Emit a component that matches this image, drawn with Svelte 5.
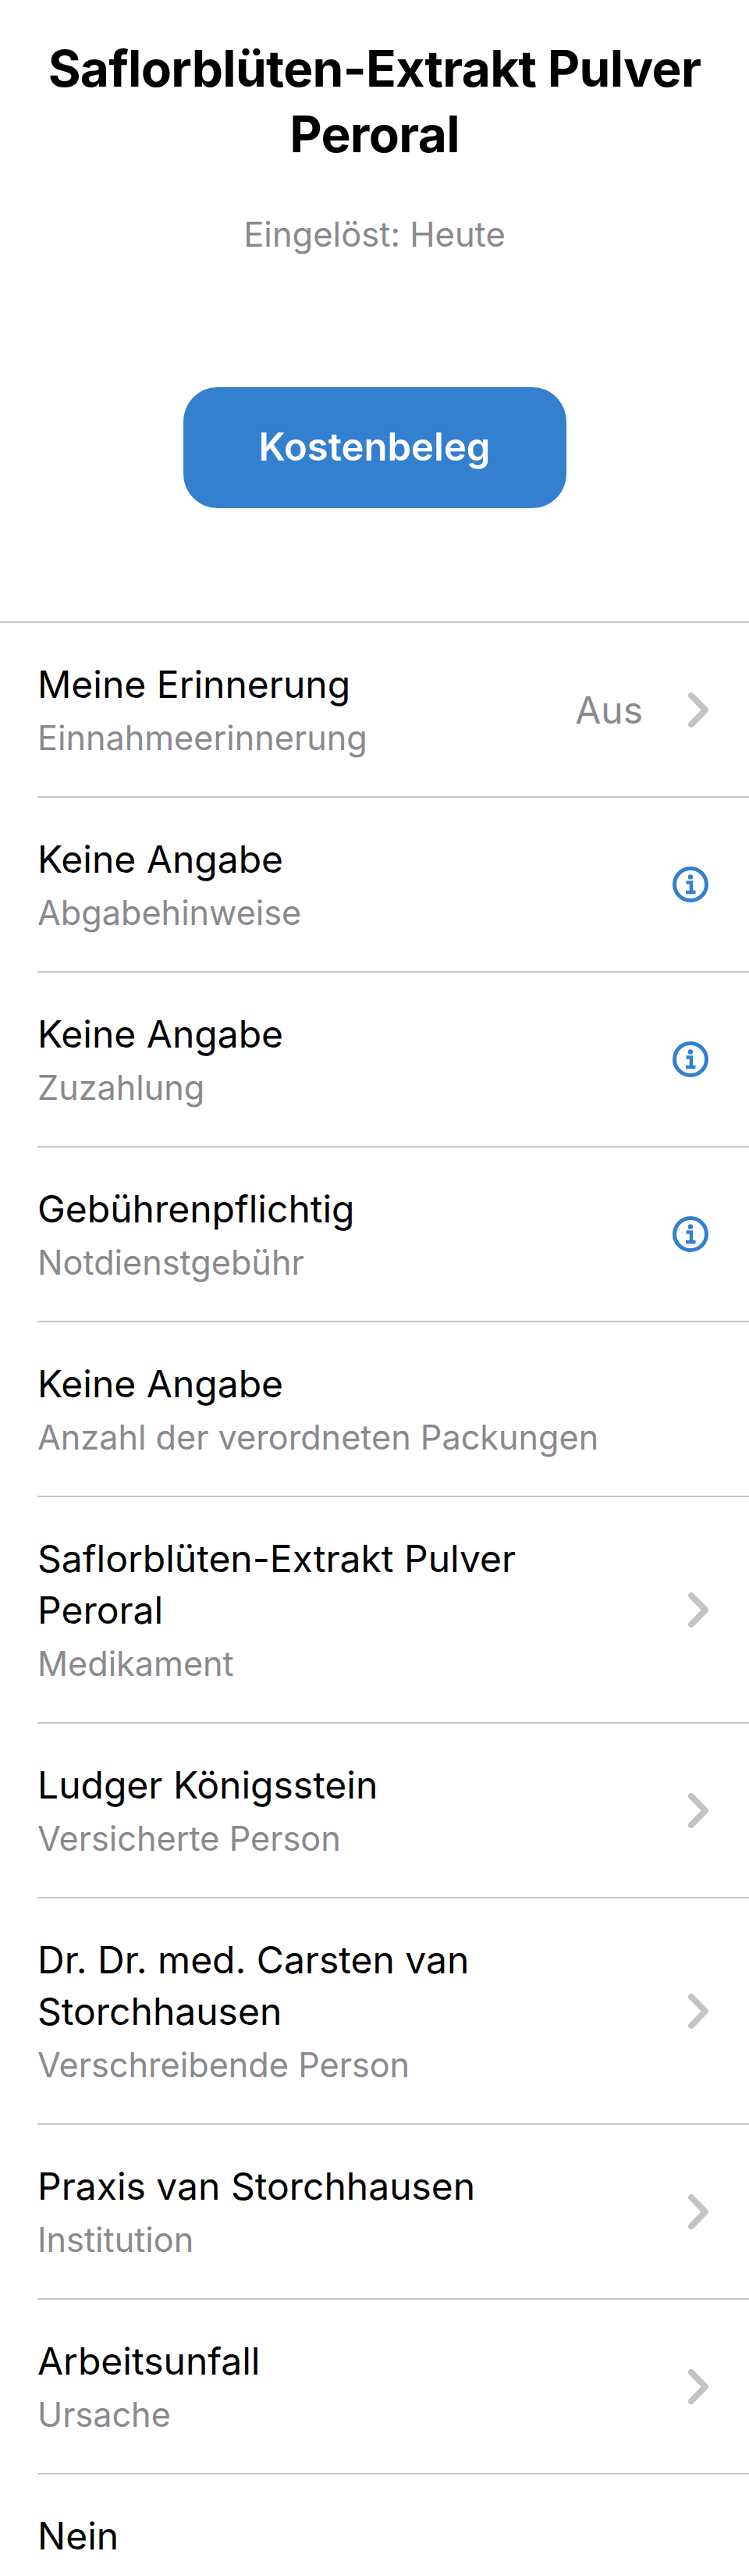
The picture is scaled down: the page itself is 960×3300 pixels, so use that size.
<script>
  const rows = [
    { title: ['Meine Erinnerung'], sub: 'Einnahmeerinnerung', value: 'Aus', icon: 'chevron' },
    { title: ['Keine Angabe'], sub: 'Abgabehinweise', icon: 'info' },
    { title: ['Keine Angabe'], sub: 'Zuzahlung', icon: 'info' },
    { title: ['Gebührenpflichtig'], sub: 'Notdienstgebühr', icon: 'info' },
    { title: ['Keine Angabe'], sub: 'Anzahl der verordneten Packungen' },
    { title: ['Saflorblüten-Extrakt Pulver', 'Peroral'], sub: 'Medikament', icon: 'chevron' },
    { title: ['Ludger Königsstein'], sub: 'Versicherte Person', icon: 'chevron' },
    { title: ['Dr. Dr. med. Carsten van', 'Storchhausen'], sub: 'Verschreibende Person', icon: 'chevron' },
    { title: ['Praxis van Storchhausen'], sub: 'Institution', icon: 'chevron' },
    { title: ['Arbeitsunfall'], sub: 'Ursache', icon: 'chevron' },
    { title: ['Nein'], sub: '' }
  ];
</script>

<div class="page">
  <header>
    <h1>Saflorblüten-Extrakt Pulver<br />Peroral</h1>
    <p class="date">Eingelöst: Heute</p>
    <button class="receipt">Kostenbeleg</button>
  </header>

  <ul>
    {#each rows as row}
      <li>
        <div class="text">
          {#each row.title as line}
            <div class="title">{line}</div>
          {/each}
          <div class="sub">{row.sub}</div>
        </div>
        {#if row.value}
          <span class="value">{row.value}</span>
        {/if}
        {#if row.icon === 'chevron'}
          <svg class="chevron" viewBox="0 0 28 47" width="28" height="47">
            <path d="M6 5 L24 23.5 L6 42" />
          </svg>
        {:else if row.icon === 'info'}
          <svg class="info" viewBox="0 0 46 46" width="46" height="46">
            <circle cx="23" cy="23" r="20.5" />
            <circle class="dot" cx="23" cy="13.5" r="3.2" />
            <path d="M17.5 20.5 H24 V32.5 M17 33 H29.5" />
          </svg>
        {/if}
      </li>
    {/each}
  </ul>
</div>

<style>
  :global(body) {
    background: #fff;
    font-family: Inter, "Liberation Sans", sans-serif;
  }

  .page {
    height: 3300px;
    overflow: hidden;
  }

  header {
    text-align: center;
    padding: 46px 40px 0;
    height: 796px;
    box-sizing: border-box;
  }

  h1 {
    margin: 0;
    font-size: 64px;
    line-height: 84px;
    font-weight: 700;
    color: #000;
    letter-spacing: -0.7px;
  }

  .date {
    margin: 58px 0 0;
    font-size: 43.5px;
    line-height: 56px;
    color: #8a8a8e;
  }

  .receipt {
    display: block;
    margin: 168px auto 0;
    padding: 0 0 2px;
    width: 491px;
    height: 155px;
    border: none;
    border-radius: 44px;
    background: #3380cf;
    color: #fff;
    font-family: inherit;
    font-size: 49px;
    font-weight: 600;
  }

  ul {
    list-style: none;
    margin: 0;
    padding: 0;
    border-top: 2px solid #c6c6c8;
  }

  li {
    display: flex;
    align-items: center;
    margin-left: 48px;
    padding-right: 52px;
    border-bottom: 2px solid #c6c6c8;
  }

  .text {
    flex: 1;
    margin: 46px 0 42px;
  }

  .title {
    font-size: 48px;
    line-height: 66px;
    color: #000;
  }

  .sub {
    padding-top: 2px;
    font-size: 43.2px;
    line-height: 66px;
    min-height: 66px;
    color: #8a8a8e;
  }

  .value {
    font-size: 48px;
    color: #8a8a8e;
    margin-right: 56px;
  }

  .chevron path {
    fill: none;
    stroke: #c4c4c6;
    stroke-width: 8;
    stroke-linecap: round;
    stroke-linejoin: round;
  }

  .info circle {
    fill: none;
    stroke: #3380cf;
    stroke-width: 5;
  }

  .info .dot {
    fill: #3380cf;
    stroke: none;
  }

  .info path {
    fill: none;
    stroke: #3380cf;
    stroke-width: 4.5;
  }
</style>
